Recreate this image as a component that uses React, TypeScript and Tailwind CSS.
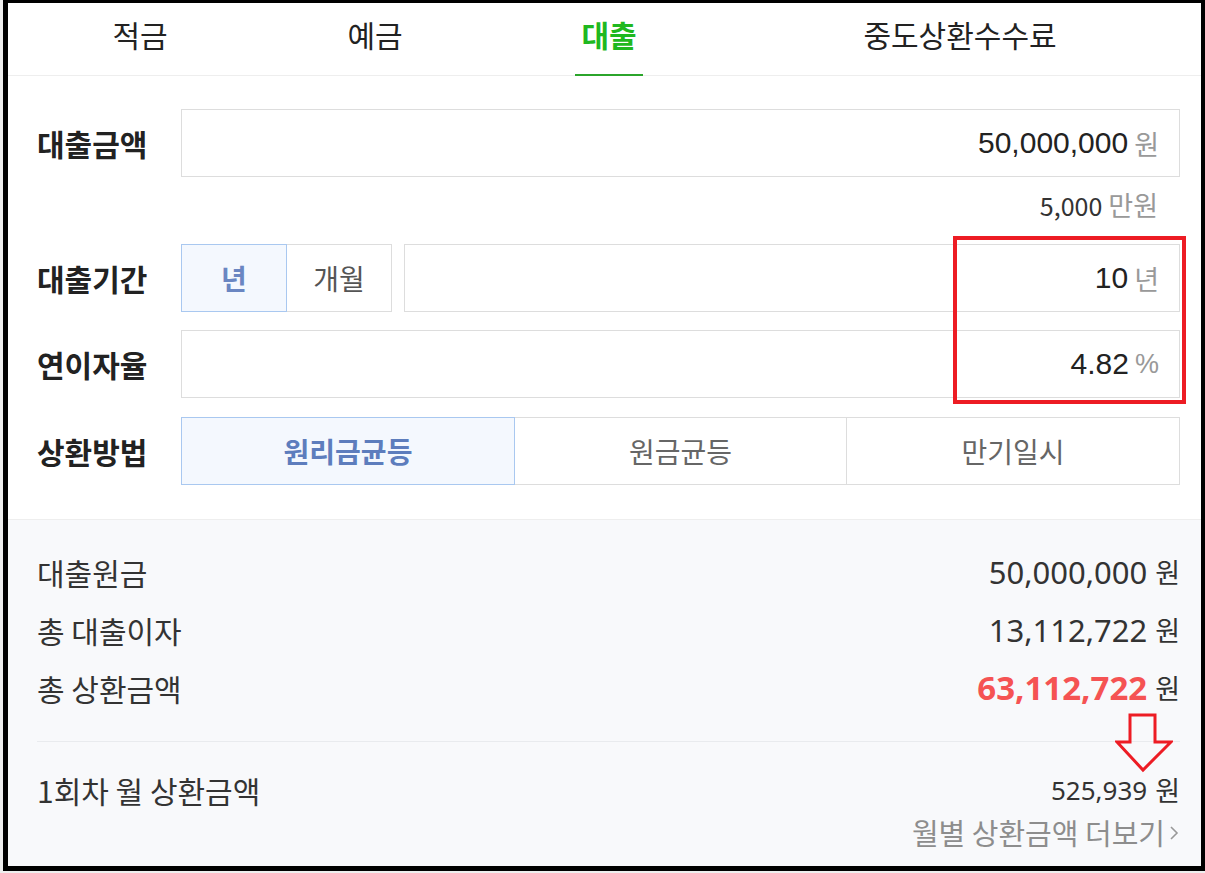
import React from 'react';

const kr = { fontFamily: '"Noto Sans CJK KR", "Noto Sans", sans-serif' };
const arial = { fontFamily: '"Liberation Sans", Arial, sans-serif' };
const noto = { fontFamily: '"Noto Sans", "Noto Sans CJK KR", sans-serif' };

const tabs = [
  { label: '적금', w: 'w-[264px]' },
  { label: '예금', w: 'w-[206px]' },
  { label: '대출', w: 'w-[262px]', active: true },
  { label: '중도상환수수료', w: 'w-[440px]' },
];

function Label({ children }: { children: React.ReactNode }) {
  return (
    <div className="w-[144px] shrink-0 text-[30px] font-bold text-[#222] leading-none" style={kr}>
      {children}
    </div>
  );
}

function ValueBox({ value, unit, unitFont }: { value: string; unit: string; unitFont?: React.CSSProperties }) {
  return (
    <div className="flex-1 h-[68px] border border-[#dddddd] bg-white flex items-center justify-end pr-[20px]">
      <span className="text-[30px] text-[#222] leading-none" style={arial}>{value}</span>
      <span className="ml-[6px] text-[27px] text-[#999] leading-none" style={unitFont ?? kr}>{unit}</span>
    </div>
  );
}

function SumRow({ label, value, red }: { label: string; value: string; red?: boolean }) {
  return (
    <div className="h-[58px] flex items-center justify-between">
      <span className="text-[30px] text-[#333]" style={kr}>{label}</span>
      <span className="flex items-center">
        <span
          className={red ? 'text-[33px] font-bold text-[#f55353]' : 'text-[31px] text-[#333]'}
          style={noto}
        >
          {value}
        </span>
        <span className="ml-[8px] text-[27px] text-[#333]" style={kr}>원</span>
      </span>
    </div>
  );
}

export default function App() {
  return (
    <div className="relative w-[1205px] h-[873px] bg-[#eeeeee] overflow-hidden">
      <div className="ml-[3px] w-[1202px] h-[871px] border-black border-t-[3px] border-l-[5px] border-r-[4px] border-b-[5px] bg-white flex flex-col">
        {/* tabs */}
        <div className="h-[73px] border-b border-[#eeeeee] flex">
          {tabs.map((t) => (
            <div key={t.label} className={`${t.w} h-full flex justify-center`}>
              <div className="relative h-full flex items-center px-[6px] pb-[10px]">
                <span
                  className={t.active ? 'text-[30px] font-bold text-[#1fb81f]' : 'text-[30px] text-[#222]'}
                  style={kr}
                >
                  {t.label}
                </span>
                {t.active && <span className="absolute left-0 right-0 -bottom-px h-[2px] bg-[#2ba52b]" />}
              </div>
            </div>
          ))}
        </div>

        {/* form */}
        <div className="pl-[29px] pr-[21px] pt-[33px] pb-[34px]">
          <div className="flex items-center">
            <Label>대출금액</Label>
            <ValueBox value="50,000,000" unit="원" />
          </div>
          <div className="h-[67px] pt-[13px] pr-[22px] flex justify-end items-start">
            <span className="text-[25px] leading-[30px] text-[#333]" style={kr}>5,000</span>
            <span className="ml-[6px] text-[27px] leading-[30px] text-[#999]" style={kr}>만원</span>
          </div>

          <div className="flex items-center">
            <Label>대출기간</Label>
            <div className="flex-1 flex items-center">
              <div className="w-[106px] h-[68px] border border-[#a9c8f0] bg-[#f4f8fe] flex items-center justify-center">
                <span className="text-[28px] font-bold text-[#6a86c2]" style={kr}>년</span>
              </div>
              <div className="w-[105px] h-[68px] border border-l-0 border-[#dddddd] bg-white flex items-center justify-center">
                <span className="text-[28px] text-[#555]" style={kr}>개월</span>
              </div>
              <div className="ml-[12px] flex-1 flex">
                <ValueBox value="10" unit="년" />
              </div>
            </div>
          </div>

          <div className="mt-[18px] flex items-center">
            <Label>연이자율</Label>
            <ValueBox value="4.82" unit="%" unitFont={arial} />
          </div>

          <div className="mt-[19px] flex items-center">
            <Label>상환방법</Label>
            <div className="flex-1 flex h-[68px]">
              <div className="w-[334px] border border-[#a9c8f0] bg-[#f4f8fe] flex items-center justify-center">
                <span className="text-[28px] font-bold text-[#5d7dbd]" style={kr}>원리금균등</span>
              </div>
              <div className="w-[332px] border border-l-0 border-[#dddddd] bg-white flex items-center justify-center">
                <span className="text-[28px] text-[#666]" style={kr}>원금균등</span>
              </div>
              <div className="flex-1 border border-l-0 border-[#dddddd] bg-white flex items-center justify-center">
                <span className="text-[28px] text-[#666]" style={kr}>만기일시</span>
              </div>
            </div>
          </div>
        </div>

        {/* summary */}
        <div className="flex-1 bg-[#f8f9fb] border-t border-[#eeeeee] pl-[29px] pr-[21px] pt-[23px]">
          <SumRow label="대출원금" value="50,000,000" />
          <SumRow label="총 대출이자" value="13,112,722" />
          <SumRow label="총 상환금액" value="63,112,722" red />
          <div className="mt-[24px] h-px bg-[#e9ebee]" />
          <div className="mt-[26px] h-[44px] flex items-center justify-between">
            <span className="text-[30px] text-[#333]" style={kr}>1회차 월 상환금액</span>
            <span className="flex items-center">
              <span className="text-[26px] text-[#333]" style={noto}>525,939</span>
              <span className="ml-[8px] text-[27px] text-[#333]" style={kr}>원</span>
            </span>
          </div>
          <div className="mt-px h-[40px] flex items-center justify-end">
            <span className="text-[29px] text-[#8d8d8d]" style={kr}>월별 상환금액 더보기</span>
            <svg width="12" height="18" viewBox="0 0 12 18" className="ml-[3px]">
              <polyline points="3,3 9,9 3,15" fill="none" stroke="#999" strokeWidth="1.6" />
            </svg>
          </div>
        </div>
      </div>

      {/* annotations */}
      <div className="absolute left-[953px] top-[236px] w-[233px] h-[168px] border-[4px] border-[#ed1c24]" />
      <svg className="absolute left-[1115px] top-[713px]" width="58" height="60" viewBox="0 0 58 60">
        <polygon
          points="15,2 40,2 40,29 56,29 28,57 2,29 15,29"
          fill="none"
          stroke="#ed1c24"
          strokeWidth="3"
        />
      </svg>
    </div>
  );
}
